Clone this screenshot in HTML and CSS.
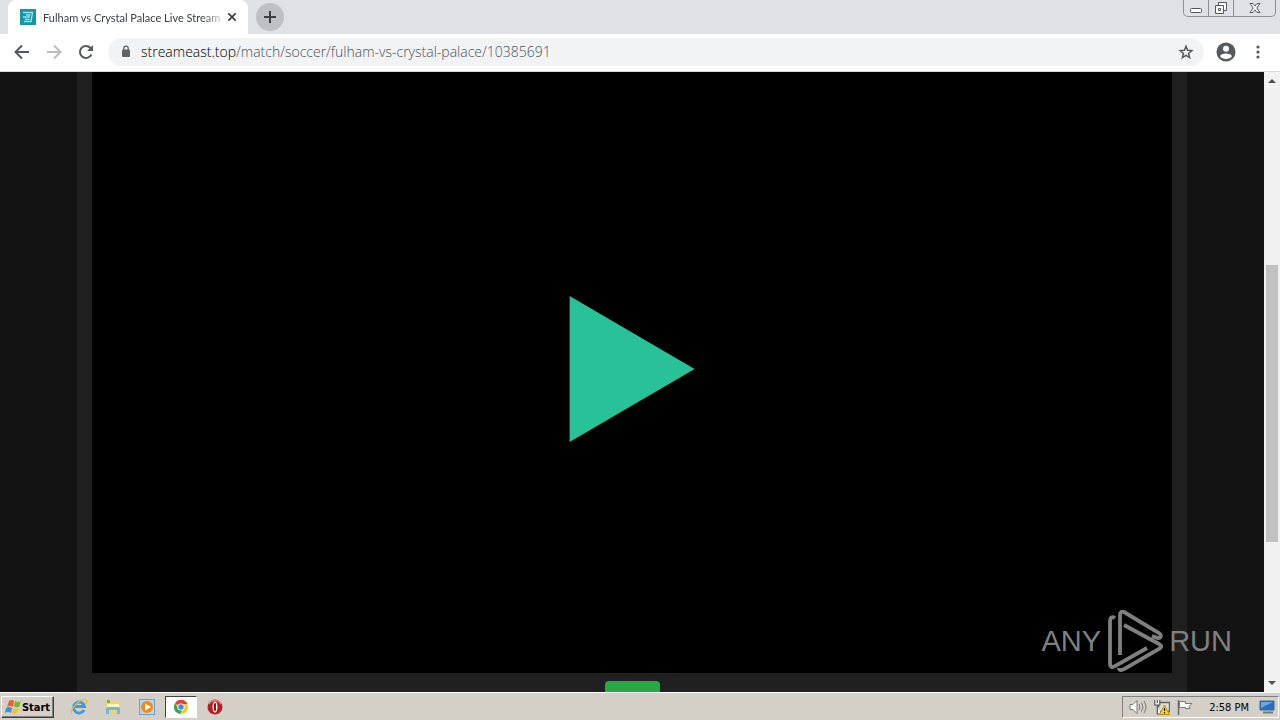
FILE: index.html
```html
<!DOCTYPE html>
<html lang="en">
<head>
<meta charset="utf-8">
<title>Fulham vs Crystal Palace Live Stream</title>
<link rel="stylesheet" href="styles.css">
</head>
<body>
<header class="tabstrip">
  <div class="tab">
    <svg class="favicon" viewBox="0 0 16 16"><rect width="16" height="16" fill="#1596a8"/><path d="M3 3.500h9.500L11 12.500H4M6 6h4.500M3 8h7M5 10.300h4.500" fill="none" stroke="#9be3e6" stroke-width="1.300"/></svg>
    <span class="tab-title">Fulham vs Crystal Palace Live Stream</span>
    <button class="tab-close" aria-label="Close tab"><svg width="10" height="10" viewBox="0 0 10 10"><path d="M1.300 1.300l7.400 7.400M8.700 1.300L1.300 8.700" stroke="#3c4043" stroke-width="1.700"/></svg></button>
  </div>
  <button class="new-tab" aria-label="New tab"><svg width="14" height="14" viewBox="0 0 14 14"><path d="M7 1v12M1 7h12" stroke="#3c4043" stroke-width="2"/></svg></button>
  <div class="window-controls">
    <button aria-label="Minimize"><svg width="14" height="16" viewBox="0 0 14 16"><rect x="1.500" y="8.500" width="11" height="4" rx="1" fill="#fff" stroke="#51565e"/></svg></button>
    <button aria-label="Restore"><svg width="14" height="16" viewBox="0 0 14 16"><path d="M4.500 2.500h8v8h-8z" fill="#fff" stroke="#51565e"/><path d="M1.500 5.500h8v8h-8z" fill="#fff" stroke="#51565e"/><path d="M4.500 8.500h2v2h-2z" fill="none" stroke="#51565e"/></svg></button>
    <button class="wide" aria-label="Close window"><svg width="14" height="16" viewBox="0 0 14 16"><path d="M2 3.500h3l2 2.500 2-2.500h3L8.800 8l3.200 4.500H9L7 10l-2 2.500H2L5.200 8z" fill="#fff" stroke="#51565e"/></svg></button>
  </div>
</header>
<nav class="toolbar">
  <button class="nav-button" aria-label="Back"><svg width="16" height="16" viewBox="0 0 16 16"><path d="M15 8H2M8 1.500L1.500 8 8 14.500" fill="none" stroke="#55595e" stroke-width="2"/></svg></button>
  <button class="nav-button" aria-label="Forward"><svg width="16" height="16" viewBox="0 0 16 16"><path d="M1 8h13M8 1.500L14.500 8 8 14.500" fill="none" stroke="#babcbe" stroke-width="2"/></svg></button>
  <button class="nav-button" aria-label="Reload"><svg width="16" height="16" viewBox="0 0 16 16"><path d="M13.500 10.300A6 6 0 1 1 12.300 3.800L13 4.500" fill="none" stroke="#55595e" stroke-width="2"/><path d="M15 1v6H9z" fill="#55595e"/></svg></button>
  <div class="omnibox">
    <svg width="10" height="13" viewBox="0 0 10 13"><rect x="1" y="4.500" width="8" height="7.500" rx="1" fill="#5f6368"/><path d="M2.800 5V3.300a2.200 2.200 0 0 1 4.400 0V5" fill="none" stroke="#5f6368" stroke-width="1.300"/></svg>
    <a class="url" href="#"><span class="domain">streameast.top</span>/match/soccer/fulham-vs-crystal-palace/10385691</a>
    <button class="star" aria-label="Bookmark this tab"><svg width="16" height="16" viewBox="0 0 16 16"><path d="M8 2.200l1.600 4 4.200.4-3.200 2.800 1 4.200L8 11.400l-3.600 2.200 1-4.200-3.200-2.800 4.200-.4z" fill="none" stroke="#55595e" stroke-width="1.500"/></svg></button>
  </div>
  <button class="profile" aria-label="Profile"><svg width="20" height="20" viewBox="0 0 20 20"><circle cx="10" cy="10" r="9.500" fill="#55595e"/><circle cx="10" cy="6.800" r="3" fill="#fff"/><path d="M4 14.200c1-3.600 11-3.600 12 0-2.500 3.700-9.500 3.700-12 0z" fill="#fff"/></svg></button>
  <button class="menu" aria-label="Menu"><svg width="4" height="14" viewBox="0 0 4 14"><g fill="#55595e"><circle cx="2" cy="2" r="1.600"/><circle cx="2" cy="7" r="1.600"/><circle cx="2" cy="12" r="1.600"/></g></svg></button>
</nav>
<div class="viewport">
  <main class="page">
    <section class="content">
      <div class="player">
        <button class="play" aria-label="Play"><svg width="126" height="146" viewBox="0 0 126 146"><path d="M.6 0l125 73-125 73z" fill="#29c197"/></svg></button>
      </div>
      <button class="action" aria-label="Stream"></button>
    </section>
  </main>
  <div class="scrollbar">
    <svg width="8" height="4" viewBox="0 0 8 4"><path d="M0 4l4-4 4 4z" fill="#505050"/></svg>
    <div class="track"><div class="thumb"></div></div>
    <svg width="8" height="4" viewBox="0 0 8 4"><path d="M0 0l4 4 4-4z" fill="#505050"/></svg>
  </div>
</div>
<div class="watermark">
  <span>ANY</span>
  <svg width="56" height="62" viewBox="0 0 56 62"><path d="M8 8C5 6 3 8 3 11v42c0 4 2 5 5 3l32-18M13 45V5c0-3 2-4 4-3l35 21c3 2 2 5-1 5l-6-2M17 15l35 19c3 2 3 3 0 5L17 59c-3 2-5 1-5-1" fill="none" stroke="#808080" stroke-width="3.800"/></svg>
  <span>RUN</span>
</div>
<footer class="taskbar">
  <button class="start"><svg width="17" height="16" viewBox="0 0 17 16"><path d="M4 2q3-2 5 0L8 8Q5 6 2 8z" fill="#e76528"/><path d="M10 2q3 2 6 0l-2 6q-3 1-5-1z" fill="#73b735"/><path d="M1 9q3-2 6 0l-1 5q-3-2-6 0z" fill="#3f8fda"/><path d="M8 9q3 2 6 0l-2 5q-3 2-5 0z" fill="#f4c328"/></svg>Start</button>
  <div class="launchers">
    <button aria-label="Internet Explorer"><svg width="18" height="18" viewBox="0 0 18 18"><path d="M14 12A5.500 5.500 0 1 1 14.500 8.500H5" fill="none" stroke="#369be0" stroke-width="2.800"/><path d="M2 16C-2 13 11-1 16 2q2 1-1 5" fill="none" stroke="#e9b842" stroke-width="1.300"/></svg></button>
    <button aria-label="Explorer"><svg width="18" height="18" viewBox="0 0 18 18"><path d="M2 2h5l1 2h7v11H2z" fill="#efd475"/><path d="M3 2h3v3H3z" fill="#64b866"/><path d="M3 6h12v4H3z" fill="#fff4bd"/><path d="M2 16v-5q0-2 2-2h10q2 0 2 2v5h-3v-4H5v4z" fill="#71b7df"/></svg></button>
    <button aria-label="Media Player"><svg width="18" height="18" viewBox="0 0 18 18"><rect x="1.500" y="1.500" width="15" height="15" fill="#b9d4ec" stroke="#69a1d0"/><circle cx="9" cy="9" r="6" fill="#f18b16"/><path d="M7 5.500l6 3.500-6 3.500z" fill="#fff"/></svg></button>
    <button class="active" aria-label="Chrome"><svg width="16" height="16" viewBox="0 0 16 16"><circle cx="8" cy="8" r="7" fill="#f8c928"/><path d="M8 8L2 4.300A7 7 0 0 1 14.500 5H8z" fill="#dc4437"/><path d="M2 4.300a7 7 0 0 0 5 10.600L10 9.500 5.500 10z" fill="#35a45a"/><circle cx="8" cy="8" r="3.600" fill="#fff"/><circle cx="8" cy="8" r="2.700" fill="#4587e8"/></svg></button>
    <button aria-label="Opera"><svg width="18" height="18" viewBox="0 0 18 18"><circle cx="9" cy="9" r="7.500" fill="#b51e22"/><path d="M3 6a7 7 0 0 1 12 0" fill="none" stroke="#e68787" stroke-width="1.500"/><ellipse cx="9" cy="9" rx="2.500" ry="5.500" fill="#fff"/><rect x="8" y="5" width="2" height="8" rx="1" fill="#9d1116"/></svg></button>
  </div>
  <div class="tray">
    <svg width="18" height="16" viewBox="0 0 18 16"><path d="M1 5.500h3l4-4v13l-4-4H1z" fill="#fff" stroke="#777"/><path d="M10 5q2 3 0 6M12.500 3.500q3 4.500 0 9M15 2q4 6 0 12" fill="none" stroke="#777"/></svg>
    <svg width="16" height="16" viewBox="0 0 16 16"><path d="M4.500 3.500h11v9h-11z" fill="#ddd" stroke="#666" stroke-width="1.400"/><path d="M.8 1v5h5V1M3.300 1v3M3.300 6v9h4" fill="#fff" stroke="#555" stroke-width="1.200"/><path d="M10.500 6l5 9.500h-10z" fill="#f7d61d" stroke="#b89000"/><path d="M10.500 9v3M10.500 13v1.500" stroke="#222" stroke-width="1.200"/></svg>
    <svg width="16" height="16" viewBox="0 0 16 16"><path d="M1.500 1v15" stroke="#666" stroke-width="1.500"/><path d="M2.500 2.500h6v2h6.500l-3 3 1 2H8.500v-1h-6z" fill="#fff" stroke="#777"/></svg>
    <time>2:58 PM</time>
    <svg width="16" height="14" viewBox="0 0 16 14"><path d="M1 1h14v9H1z" fill="#286ec1" stroke="#416380"/><path d="M2 2h12L2 8z" fill="#61a8e6"/><path d="M4 12.500h10" stroke="#687b88" stroke-width="2"/></svg>
  </div>
</footer>
</body>
</html>
```
FILE: styles.css
```css
* { box-sizing: border-box; }
body {
  margin: 0;
  height: 100vh;
  display: flex;
  flex-direction: column;
  overflow: hidden;
  position: relative;
  background: #131313;
  font-family: "DejaVu Sans Condensed", "Noto Sans", sans-serif;
}
button {
  display: flex;
  align-items: center;
  justify-content: center;
  flex: none;
  padding: 0;
  border: 0;
  background: none;
  font: inherit;
}
svg { display: block; flex: none; }

.tabstrip { height: 34px; flex: none; display: flex; background: #dee1e6; padding-left: 8px; }
.tab {
  width: 240px;
  display: flex;
  align-items: center;
  padding: 0 8px 0 12px;
  background: #fff;
  border-radius: 8px 8px 0 0;
}
.favicon { width: 16px; height: 16px; margin-right: 7px; }
.tab-title {
  flex: 1;
  white-space: nowrap;
  font: 11px Lato, sans-serif;
  color: #3c4043;
  mask-image: linear-gradient(to right, #000 88%, transparent 102%);
}
.tab-close { width: 16px; height: 16px; }
.new-tab { width: 28px; height: 28px; margin: 3px 0 0 8px; border-radius: 50%; background: #bdc0c5; }
.window-controls {
  display: flex;
  height: 17px;
  margin: 0 4px 0 auto;
  border: 1px solid #8b8f98;
  border-top: 0;
  border-radius: 0 0 5px 5px;
}
.window-controls button { width: 24px; }
.window-controls button + button { width: 25px; border-left: 1px solid #8b8f98; }
.window-controls button.wide { width: 42px; }

.toolbar {
  height: 38px;
  flex: none;
  display: flex;
  align-items: center;
  padding: 0 14px 2px;
  background: #fff;
  border-bottom: 1px solid #d5d7da;
}
.nav-button { width: 16px; height: 16px; margin-right: 16px; }
.omnibox {
  flex: 1;
  min-width: 0;
  height: 28px;
  margin: 0 12px 0 -2px;
  padding: 0 10px 0 13px;
  display: flex;
  align-items: center;
  background: #f1f3f4;
  border-radius: 14px;
}
.url {
  flex: 1;
  margin-left: 10px;
  overflow: hidden;
  white-space: nowrap;
  text-decoration: none;
  font: 300 14px "Open Sans", sans-serif;
  color: #4d5156;
}
.domain { color: #000; }
.menu { width: 16px; height: 16px; margin: 0 0 0 14px; }

.viewport { flex: 1; min-height: 0; display: flex; }
.page { flex: 1; overflow: hidden; background: #131313; }
.content {
  max-width: 1110px;
  margin: -7px auto 0;
  padding: 0 15px;
  background: #202020;
}
.player {
  aspect-ratio: 16 / 9;
  display: flex;
  align-items: center;
  justify-content: center;
  background: #000;
}
.action {
  width: 55px;
  height: 38px;
  margin: 8px auto 0;
  background: #28a745;
  border-radius: 4px;
}
.scrollbar {
  width: 16px;
  flex: none;
  padding: 7px 0;
  display: flex;
  flex-direction: column;
  align-items: center;
  background: #f1f1f1;
}
.track { flex: 1; width: 12px; padding: 182px 0 139px; }
.thumb { height: 100%; background: #c1c1c1; }

.watermark {
  position: absolute;
  right: 48px;
  bottom: 48px;
  display: flex;
  align-items: center;
  gap: 6px;
  color: #808080;
  font: 29px "Liberation Sans", sans-serif;
}

.taskbar {
  height: 28px;
  flex: none;
  display: flex;
  align-items: center;
  padding: 1px 1px 0;
  background: #d4d0c8;
  border-top: 1px solid #fff;
}
.start {
  width: 53px;
  height: 22px;
  border: 1px solid #fff;
  border-right-color: #404040;
  border-bottom-color: #404040;
  box-shadow: inset -1px -1px #808080;
  font: bold 11px "DejaVu Sans Condensed", sans-serif;
  color: #000;
}
.launchers { display: flex; gap: 2px; margin-left: 9px; }
.launchers button { width: 32px; height: 22px; }
.launchers .active {
  background: #fff;
  border: 1px solid #404040;
  border-right-color: #fff;
  border-bottom-color: #fff;
}
.tray {
  height: 22px;
  margin-left: auto;
  padding: 0 3px 0 6px;
  display: flex;
  align-items: center;
  gap: 7px;
  border: 1px solid #808080;
  border-right-color: #fff;
  border-bottom-color: #fff;
  font: 11px "DejaVu Sans Condensed", sans-serif;
  color: #000;
}
.tray time { margin: 0 3px 0 9px; }
```
